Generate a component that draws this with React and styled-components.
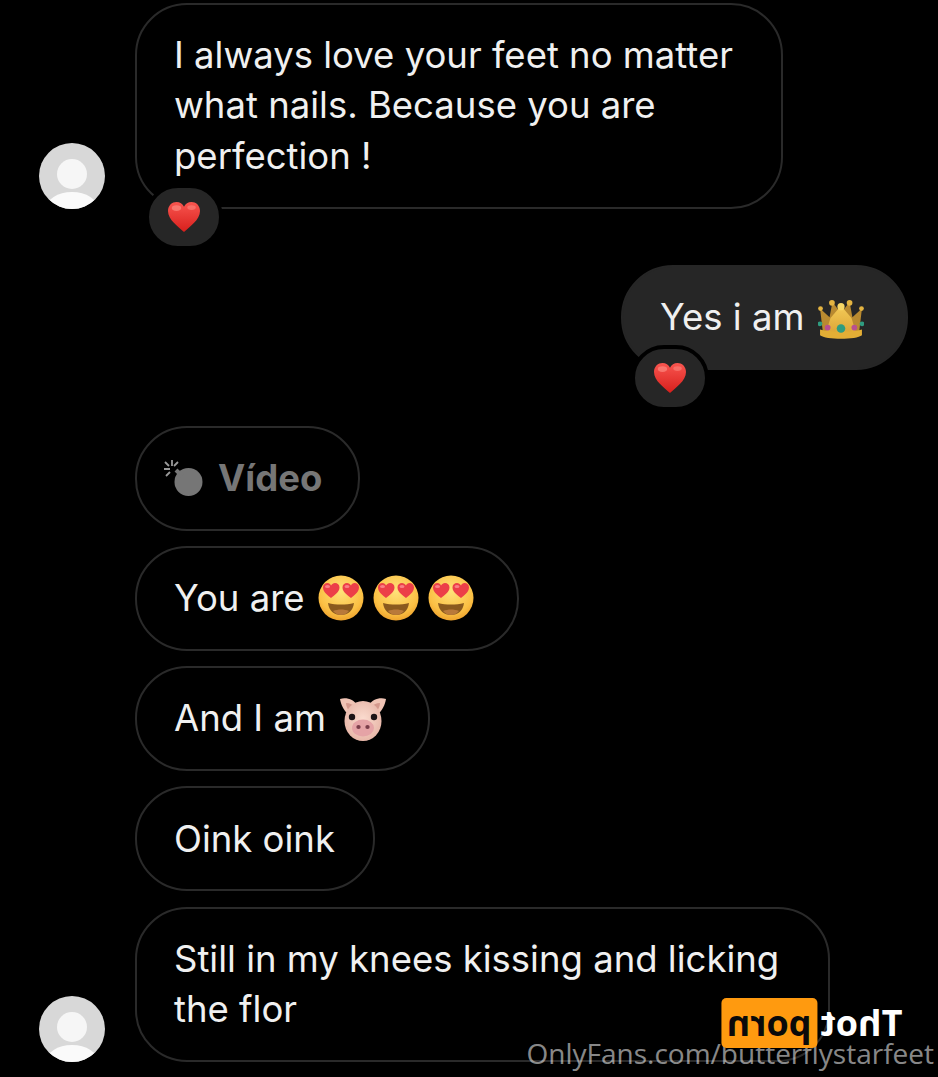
import styled, { createGlobalStyle } from 'styled-components';

const GlobalStyle = createGlobalStyle`
  html, body {
    margin: 0;
    padding: 0;
    background: #000;
  }
  * { box-sizing: border-box; }
`;

const Page = styled.div`
  position: relative;
  width: 938px;
  height: 1077px;
  overflow: hidden;
  background: #000;
  font-family: 'Inter', 'Liberation Sans', sans-serif;
`;

const Thread = styled.div`
  display: flex;
  flex-direction: column;
  gap: 56px;
  padding: 2.5px 30px 0 39px;
`;

const Group = styled.div`
  display: flex;
  flex-direction: column;
  gap: 15.3px;
`;

const Row = styled.div`
  display: flex;
  align-items: flex-end;
  justify-content: ${(p) => (p.$mine ? 'flex-end' : 'flex-start')};
`;

const AvatarSlot = styled.div`
  flex: none;
  width: 66px;
  height: 66px;
  margin-right: 30px;
`;

const Bubble = styled.div`
  position: relative;
  width: ${(p) => p.$width}px;
  padding: 25.25px 0 25.25px 37px;
  border: 2px solid ${(p) => (p.$mine ? '#262626' : '#2a2a2a')};
  border-radius: 52px;
  background: ${(p) => (p.$mine ? '#262626' : 'transparent')};
  color: #f0f0f0;
  font-size: 36.5px;
  line-height: 50.5px;
  white-space: nowrap;
`;

const Line = styled.div`
  display: flex;
  align-items: center;
  gap: ${(p) => p.$gap || 0}px;
  height: 50.5px;
`;

const Word = styled.span`
  margin-right: ${(p) => p.$after || 0}px;
`;

const VideoLabel = styled.span`
  color: #767676;
  font-weight: 700;
`;

const BombIcon = styled.svg`
  flex: none;
  margin-left: -11px;
  margin-right: 13px;
`;

const CrownIcon = styled.svg`
  flex: none;
  margin-top: 5px;
`;

const Reaction = styled.div`
  position: absolute;
  left: 8px;
  bottom: -43px;
  width: 78px;
  height: 66px;
  display: flex;
  align-items: center;
  justify-content: center;
  background: #262626;
  border: 4px solid #000;
  border-radius: 33px;
`;

const Watermark = styled.div`
  position: absolute;
  right: 4px;
  bottom: 19px;
  display: flex;
  flex-direction: column;
  align-items: flex-end;
  font-family: 'Open Sans', 'Noto Sans', sans-serif;
`;

const Mirrored = styled.div`
  display: flex;
  align-items: center;
  gap: 3px;
  margin-right: 32px;
  height: 50px;
  transform: scaleX(-1);
  font-weight: 700;
  font-size: 36px;
  line-height: 50px;
  color: #fff;
`;

const PornBox = styled.span`
  display: block;
  width: 96px;
  height: 50px;
  border-radius: 5px;
  background: #ff9a0f;
  color: #0a0a0a;
  text-align: center;
`;

const SiteLine = styled.div`
  font-size: 28px;
  line-height: 10px;
  color: rgba(255, 255, 255, 0.55);
  white-space: nowrap;
`;

const Avatar = () => (
  <AvatarSlot>
    <svg width="66" height="66" viewBox="0 0 66 66">
      <defs>
        <clipPath id="avatar-clip">
          <circle cx="33" cy="33" r="33" />
        </clipPath>
      </defs>
      <circle cx="33" cy="33" r="33" fill="#d8d8d8" />
      <circle cx="33" cy="31" r="15" fill="#f6f6f6" />
      <g clipPath="url(#avatar-clip)">
        <ellipse cx="33" cy="66" rx="26" ry="17" fill="#fafafa" />
      </g>
    </svg>
  </AvatarSlot>
);

const Heart = () => (
  <svg width="34" height="32" viewBox="0 0 36 34">
    <defs>
      <linearGradient id="heart-fill" x1="0" y1="0" x2="0" y2="1">
        <stop offset="0" stopColor="#f8554f" />
        <stop offset="1" stopColor="#d81f1c" />
      </linearGradient>
    </defs>
    <path
      d="M18 33C12 27 1 20 1 10.500 1 4.500 5.500 1 10 1c3.600 0 6.500 2 8 5 1.500-3 4.400-5 8-5 4.500 0 9 3.500 9 9.500C35 20 24 27 18 33z"
      fill="url(#heart-fill)"
    />
    <ellipse cx="10" cy="7.500" rx="5" ry="3" fill="#ff9a90" opacity="0.55" />
    <ellipse cx="26" cy="7" rx="4.500" ry="2.500" fill="#ff9a90" opacity="0.45" />
  </svg>
);

const Crown = () => (
  <CrownIcon width="46" height="40" viewBox="0 0 48 42">
    <defs>
      <linearGradient id="crown-fill" x1="0" y1="0" x2="0" y2="1">
        <stop offset="0" stopColor="#f4cb58" />
        <stop offset="1" stopColor="#dca536" />
      </linearGradient>
    </defs>
    <path d="M5 34 2 9l10 9 3-16 9 12 9-12 3 16 10-9-3 25z" fill="#b98a30" />
    <path d="M8 35 13 19 24 6l11 13 5 16z" fill="url(#crown-fill)" />
    <circle cx="2.500" cy="9" r="2.500" fill="#e4b441" />
    <circle cx="14.500" cy="3" r="3" fill="#e4b441" />
    <circle cx="24" cy="7" r="3.800" fill="#f7d766" />
    <circle cx="33" cy="3" r="3" fill="#e4b441" />
    <circle cx="45.500" cy="9" r="2.500" fill="#e4b441" />
    <path d="M2 31c10 3 34 3 44 0v6c-6 5-38 5-44 0z" fill="#e3ae35" />
    <ellipse cx="24" cy="30" rx="4.500" ry="4.500" fill="#2f9c80" />
    <circle cx="10" cy="29" r="3" fill="#b9508f" />
    <circle cx="38" cy="29" r="3" fill="#b9508f" />
    <circle cx="2" cy="25" r="2.500" fill="#2f9c80" />
    <circle cx="46" cy="25" r="2.500" fill="#2f9c80" />
  </CrownIcon>
);

const HeartEyes = () => (
  <svg width="46" height="46" viewBox="0 0 46 46">
    <defs>
      <radialGradient id="face-fill" cx="0.5" cy="0.35" r="0.7">
        <stop offset="0" stopColor="#ffe27a" />
        <stop offset="0.7" stopColor="#fbc044" />
        <stop offset="1" stopColor="#ea9a27" />
      </radialGradient>
    </defs>
    <circle cx="23" cy="23" r="22.500" fill="url(#face-fill)" />
    <path d="M10 28c8 2 18 2 26 0-1 8-6 12-13 12S11 36 10 28z" fill="#8a5a1e" />
    <path d="M15 36c5-2 11-2 16 0-3 3-5 4-8 4s-5-1-8-4z" fill="#b9793a" />
    <path
      d="M13 23C10 20.500 5 17 5 12.500 5 9.500 7 8 9.500 8c1.600 0 3 1 3.500 2.500C14 9 15.400 8 17 8c2.500 0 4.500 1.500 4.500 4.500 0 4.500-5.500 8-8.500 10.500z"
      fill="#ec3f48"
    />
    <path
      d="M33 23c-3-2.500-8.500-6-8.500-10.500C24.500 9.500 26.500 8 29 8c1.600 0 3 1 4 2.500C33.500 9 34.900 8 36.500 8 39 8 41 9.500 41 12.500c0 4.500-5 8-8 10.500z"
      fill="#ec3f48"
    />
    <ellipse cx="9.500" cy="11.500" rx="2.500" ry="1.500" fill="#ff9ca0" opacity="0.7" />
    <ellipse cx="29" cy="11.500" rx="2.500" ry="1.500" fill="#ff9ca0" opacity="0.7" />
  </svg>
);

const Pig = () => (
  <svg width="48" height="46" viewBox="0 0 48 46">
    <defs>
      <radialGradient id="pig-fill" cx="0.5" cy="0.45" r="0.6">
        <stop offset="0" stopColor="#fbdccf" />
        <stop offset="1" stopColor="#e6b3a5" />
      </radialGradient>
    </defs>
    <path d="M1 3c7-2 14 1 17 6l-8 10C5 15 2 9 1 3z" fill="#f0c4b5" />
    <path d="M47 3c-7-2-14 1-17 6l8 10c5-4 8-10 9-16z" fill="#f0c4b5" />
    <path d="M7 7c4 0 7 2 9 4l-5 6C9 14 7 10 7 7z" fill="#d4998d" />
    <path d="M41 7c-4 0-7 2-9 4l5 6c2-3 4-7 4-10z" fill="#d4998d" />
    <ellipse cx="24" cy="25" rx="18.500" ry="20" fill="url(#pig-fill)" />
    <circle cx="13" cy="21" r="3.200" fill="#1c1416" />
    <circle cx="35" cy="21" r="3.200" fill="#1c1416" />
    <ellipse cx="24" cy="32" rx="11" ry="8.500" fill="#e5a3a6" />
    <ellipse cx="19.500" cy="31" rx="2.200" ry="2" fill="#7a3d49" />
    <ellipse cx="28.500" cy="31" rx="2.200" ry="2" fill="#7a3d49" />
  </svg>
);

const Bomb = () => (
  <BombIcon width="42" height="40" viewBox="0 0 42 40">
    <circle cx="25.500" cy="24" r="14" fill="#767676" />
    <path d="M13 12l6 6" stroke="#767676" strokeWidth="4" />
    <path
      d="M9 2v6M2 4l4 4M1 11h6M3 18l4-4M15 4l-4 4"
      stroke="#9a9a9a"
      strokeWidth="1.800"
      fill="none"
    />
  </BombIcon>
);

const App = () => {
  return (
    <Page>
      <GlobalStyle />
      <Thread>
        <Row>
          <Avatar />
          <Bubble $width={648}>
            <Line>I always love your feet no matter</Line>
            <Line>what nails. Because you are</Line>
            <Line>perfection !</Line>
            <Reaction>
              <Heart />
            </Reaction>
          </Bubble>
        </Row>
        <Row $mine>
          <Bubble $mine $width={287}>
            <Line $gap={14}>
              <span>Yes i am</span>
              <Crown />
            </Line>
            <Reaction>
              <Heart />
            </Reaction>
          </Bubble>
        </Row>
        <Group>
          <Row>
            <AvatarSlot />
            <Bubble $width={225}>
              <Line>
                <Bomb />
                <VideoLabel>Vídeo</VideoLabel>
              </Line>
            </Bubble>
          </Row>
          <Row>
            <AvatarSlot />
            <Bubble $width={384}>
              <Line $gap={9}>
                <Word $after={4}>You are</Word>
                <HeartEyes />
                <HeartEyes />
                <HeartEyes />
              </Line>
            </Bubble>
          </Row>
          <Row>
            <AvatarSlot />
            <Bubble $width={295}>
              <Line $gap={13}>
                <span>And I am</span>
                <Pig />
              </Line>
            </Bubble>
          </Row>
          <Row>
            <AvatarSlot />
            <Bubble $width={240}>
              <Line>Oink oink</Line>
            </Bubble>
          </Row>
          <Row>
            <Avatar />
            <Bubble $width={695}>
              <Line>Still in my knees kissing and licking</Line>
              <Line>the flor</Line>
            </Bubble>
          </Row>
        </Group>
      </Thread>
      <Watermark>
        <Mirrored>
          <span>Thot</span>
          <PornBox>porn</PornBox>
        </Mirrored>
        <SiteLine>OnlyFans.com/butterflystarfeet</SiteLine>
      </Watermark>
    </Page>
  );
};

export default App;
